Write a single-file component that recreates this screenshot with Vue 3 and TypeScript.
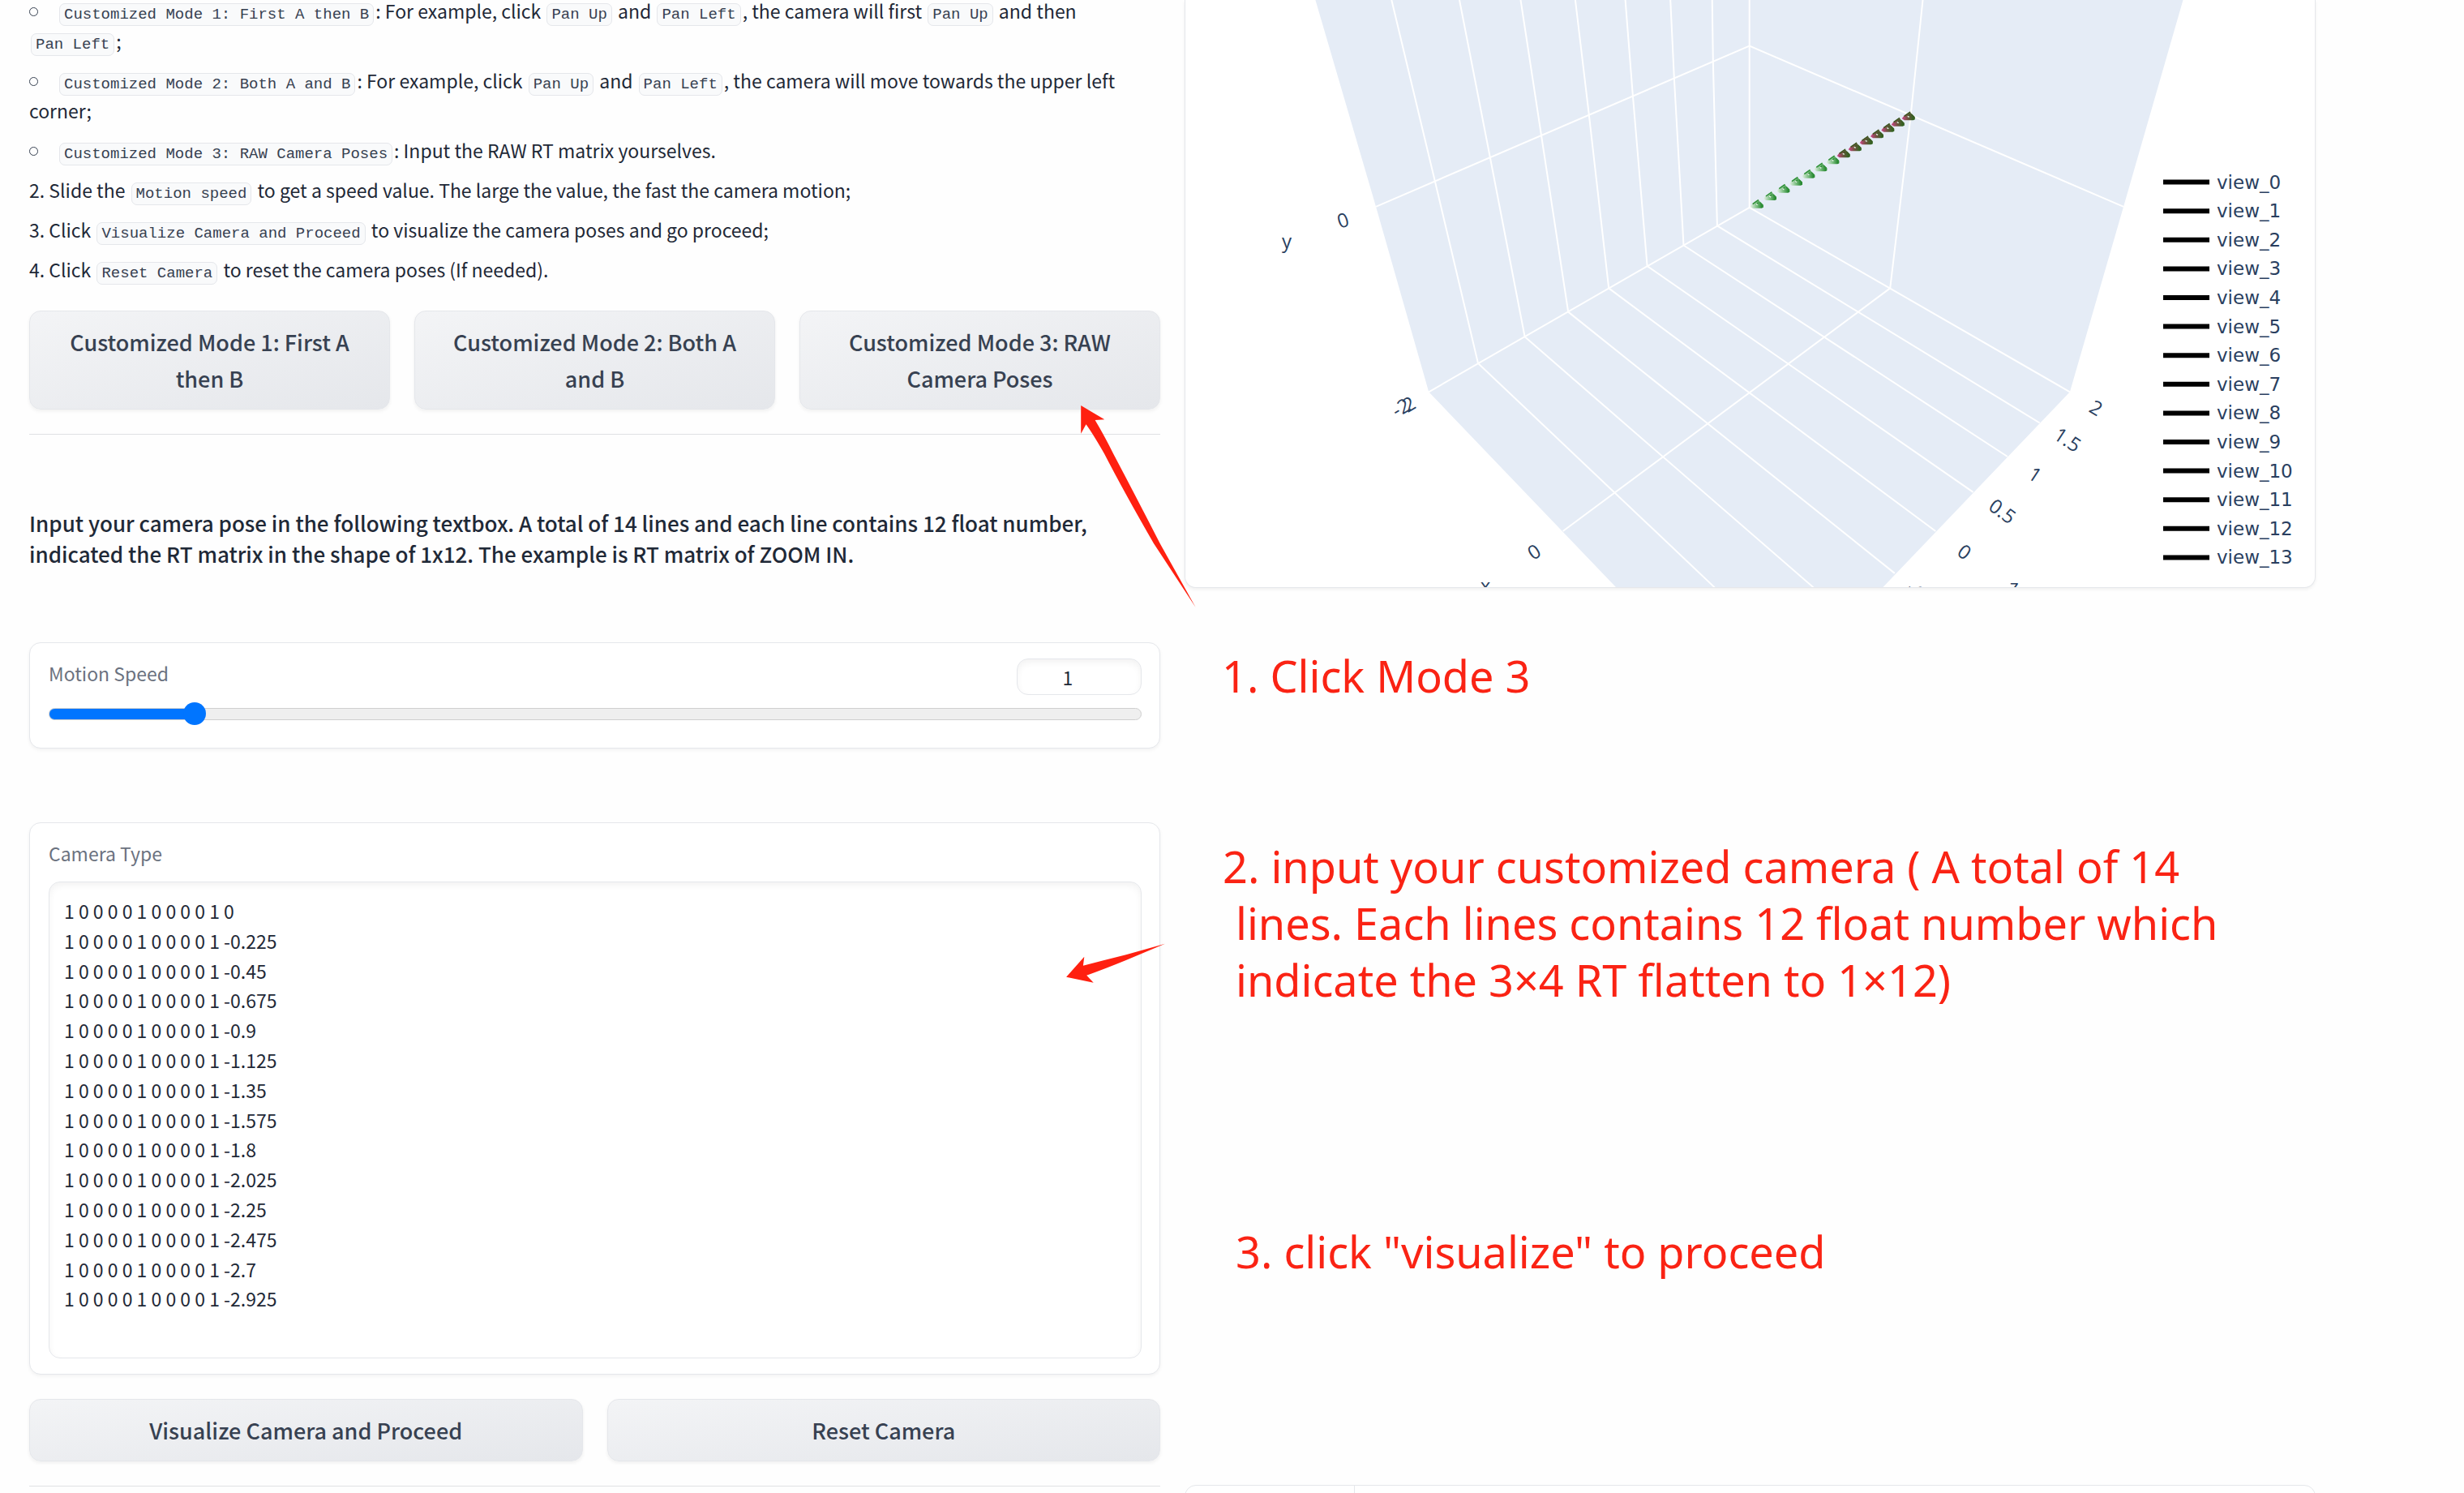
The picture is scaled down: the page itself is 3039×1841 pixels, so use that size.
<script setup lang="ts">
import { computed, ref } from 'vue'

type Segment = { text: string; code?: boolean }

const modeHints: Segment[][] = [
  [
    { text: 'Customized Mode 1: First A then B', code: true },
    { text: ': For example, click ' },
    { text: 'Pan Up', code: true },
    { text: ' and ' },
    { text: 'Pan Left', code: true },
    { text: ', the camera will first ' },
    { text: 'Pan Up', code: true },
    { text: ' and then ' },
    { text: 'Pan Left', code: true },
    { text: ';' },
  ],
  [
    { text: 'Customized Mode 2: Both A and B', code: true },
    { text: ': For example, click ' },
    { text: 'Pan Up', code: true },
    { text: ' and ' },
    { text: 'Pan Left', code: true },
    { text: ', the camera will move towards the upper left corner;' },
  ],
  [
    { text: 'Customized Mode 3: RAW Camera Poses', code: true },
    { text: ': Input the RAW RT matrix yourselves.' },
  ],
]

const steps: Segment[][] = [
  [
    { text: '2. Slide the ' },
    { text: 'Motion speed', code: true },
    { text: ' to get a speed value. The large the value, the fast the camera motion;' },
  ],
  [
    { text: '3. Click ' },
    { text: 'Visualize Camera and Proceed', code: true },
    { text: ' to visualize the camera poses and go proceed;' },
  ],
  [
    { text: '4. Click ' },
    { text: 'Reset Camera', code: true },
    { text: ' to reset the camera poses (If needed).' },
  ],
]

const modes = [
  'Customized Mode 1: First A then B',
  'Customized Mode 2: Both A and B',
  'Customized Mode 3: RAW Camera Poses',
]

const speed = ref(1)
const maxSpeed = 8
const fill = computed(() => `${(speed.value / maxSpeed) * 100}%`)

const depths = ['-0.225', '-0.45', '-0.675', '-0.9', '-1.125', '-1.35', '-1.575', '-1.8', '-2.025', '-2.25', '-2.475', '-2.7', '-2.925']
const poses = ref(['1 0 0 0 0 1 0 0 0 0 1 0', ...depths.map((d) => `1 0 0 0 0 1 0 0 0 0 1 ${d}`)].join('\n') + '\n')

const views = Array.from({ length: 14 }, (_, i) => ({ name: `view_${i}`, y: 224.6 + i * 35.6 }))

const grid = [
  'M1716.3 0L1769.9 223.7L1823 447.9L2114.8 724.4',
  'M1800 0L1837.8 194L1880.6 415.3L2236.7 724.4',
  'M1875.5 0L1901 167L1934.2 384.6L2336.8 706.9',
  'M1942.9 0L1959.7 140.6L1984.2 355.4L2387.3 655',
  'M2004.6 0L2013.8 117L2031.6 328L2433.6 606.9',
  'M2060.2 0L2064.8 95.8L2076.5 302.5L2475.9 563',
  'M2111.7 0L2112.8 74.6L2117.9 278.4L2515.7 521.5',
  'M1697 254.8L2157.7 56.6L2619.1 254.8',
  'M1762.2 483.3L2157.7 255.8L2552.9 483.3',
  'M2157.7 0V255.8',
  'M2371.5 0L2356.7 141.6L2331.2 355.4L1927.6 655',
]

const frusta = [
  [2166.7, 251.7], [2183, 242], [2199.3, 232.7], [2215, 223.7], [2230.3, 214.7], [2245.3, 206.3], [2260.3, 197.3],
  [2273.7, 189.3], [2287.7, 181.3], [2301.7, 173.3], [2315, 165.3], [2328.3, 157.7], [2340.7, 150.7], [2353.7, 143.3],
].map(([x, y], i) => ({ x, y, paint: i < 7 ? 'url(#green)' : 'url(#red)', dark: i >= 7 }))

const ticks = [
  { t: '0', x: 1656.6, y: 272.3, r: -18 },
  { t: '2', x: 1738, y: 499, r: -30 },
  { t: '-2', x: 1728, y: 503, r: -30 },
  { t: '0', x: 1892.3, y: 681, r: -33 },
  { t: '2', x: 2585, y: 503.5, r: 30 },
  { t: '1.5', x: 2549.8, y: 542.7, r: 33 },
  { t: '1', x: 2509.5, y: 585.7, r: 33 },
  { t: '0.5', x: 2469.3, y: 631, r: 36 },
  { t: '0', x: 2422.4, y: 681, r: 36 },
  { t: '-0.5', x: 2370, y: 736, r: 43 },
]
</script>

<template>
  <main class="page">
    <section class="column">
      <div class="prose">
        <ul>
          <li v-for="(hint, i) in modeHints" :key="i">
            <template v-for="(s, j) in hint" :key="j"><code v-if="s.code">{{ s.text }}</code><template v-else>{{ s.text }}</template></template>
          </li>
        </ul>
        <p v-for="(step, i) in steps" :key="i">
          <template v-for="(s, j) in step" :key="j"><code v-if="s.code">{{ s.text }}</code><template v-else>{{ s.text }}</template></template>
        </p>
      </div>

      <div class="buttons modes">
        <button v-for="m in modes" :key="m" type="button">{{ m }}</button>
        <svg class="arrow arrow-mode" viewBox="1333 500 142 250" width="142" height="250" aria-hidden="true">
          <path d="M1333.2 500L1362.3 517.3L1350.6 518Q1362 537 1373.4 560Q1404 618 1430.6 670L1474.7 749L1422.9 670Q1386 606 1362.3 560Q1348 535 1339.5 523.3L1333.2 534.7Z" />
        </svg>
      </div>

      <hr />

      <h3>Input your camera pose in the following textbox. A total of 14 lines and each line contains 12 float number, indicated the RT matrix in the shape of 1x12. The example is RT matrix of ZOOM IN.</h3>

      <div class="card speed">
        <div class="speed-head">
          <label for="speed">Motion Speed</label>
          <input v-model.number="speed" class="number" type="number" min="0" :max="maxSpeed" aria-label="Motion Speed value" />
        </div>
        <input id="speed" v-model.number="speed" class="slider" type="range" min="0" :max="maxSpeed" :style="{ '--fill': fill }" />
      </div>

      <div class="card poses">
        <label for="poses">Camera Type</label>
        <textarea id="poses" v-model="poses" rows="15" spellcheck="false"></textarea>
        <svg class="arrow arrow-poses" viewBox="1315 1163 122 49" width="122" height="49" aria-hidden="true">
          <path d="M1315.1 1204.7L1337.3 1179.7L1335.9 1190.7Q1362 1184 1388.8 1177.3L1436.9 1163.7L1388.8 1184Q1362 1195 1340.2 1202.7L1348.7 1211.7Z" />
        </svg>
      </div>

      <div class="buttons">
        <button type="button">Visualize Camera and Proceed</button>
        <button type="button">Reset Camera</button>
      </div>

      <hr />
    </section>

    <section class="column">
      <div class="plot">
        <svg viewBox="1462 0 1393 724" role="img" aria-label="Camera poses">
          <defs>
            <linearGradient id="green">
              <stop offset="0" stop-color="#e8f3ea" />
              <stop offset="0.5" stop-color="#7dbf83" />
              <stop offset="1" stop-color="#127a1c" />
            </linearGradient>
            <linearGradient id="red">
              <stop offset="0" stop-color="#d0458c" />
              <stop offset="0.4" stop-color="#7d5048" />
              <stop offset="1" stop-color="#1d6a16" />
            </linearGradient>
          </defs>
          <path class="walls" d="M1622.4 0L1697 254.8L1762.2 483.3L1993.9 725H2321.5L2552.9 483.3L2619.1 254.8L2692.5 0Z" />
          <path v-for="d in grid" :key="d" class="grid" :d="d" />
          <g v-for="f in frusta" :key="f.x" :transform="`translate(${f.x} ${f.y})`">
            <path d="M-8 3L-5 -1L0 -4L2 -6L3 -4L8 1V4L6 5H-5Z" :fill="f.paint" />
            <path d="M-5 0L-1 -3L2 -5M4 -2L7 1V4M-1 1L2 -2" fill="none" :stroke="f.dark ? '#3c5a22' : '#2f8f38'" stroke-width="1.5" />
            <path d="M-1 0L1 1" stroke="#eef5ee" stroke-width="1.5" />
          </g>
          <text
            v-for="(k, i) in ticks"
            :key="i"
            class="tick"
            text-anchor="middle"
            dy="8"
            :transform="`translate(${k.x} ${k.y}) rotate(${k.r})`"
          >{{ k.t }}</text>
          <text class="axis" text-anchor="middle" x="1587" y="306">y</text>
          <text class="axis" text-anchor="middle" x="1832" y="731">x</text>
          <text class="axis" text-anchor="middle" x="2484" y="732">z</text>
          <g v-for="v in views" :key="v.name">
            <path class="swatch" :d="`M2668 ${v.y}H2725`" />
            <text class="legend" x="2734" :y="v.y + 8">{{ v.name }}</text>
          </g>
        </svg>
      </div>

      <p class="note first">1. Click Mode 3</p>
      <p class="note second">2. input your customized camera ( A total of 14<br />lines. Each lines contains 12 float number which<br />indicate the 3×4 RT flatten to 1×12)</p>
      <p class="note third">3. click "visualize" to proceed</p>

      <div class="panel"><div class="tab"></div></div>
    </section>
  </main>
</template>

<style>
body {
  background: #fefefe;
}
</style>

<style scoped>
.page {
  display: grid;
  grid-template-columns: 1fr 1fr;
  gap: 30px;
  height: 100vh;
  overflow: hidden;
  padding: 0 183px 0 36px;
  box-sizing: border-box;
  color: #1f2937;
  font-family: "Noto Sans CJK SC", "Noto Sans", sans-serif;
  font-size: 23px;
  line-height: 37px;
}

.column {
  min-width: 0;
}

.prose {
  margin: -5px 0 32px;
  padding-right: 24px;
}

ul {
  margin: 0;
  padding: 0;
  list-style: none;
}

li,
.prose p {
  margin: 0 0 12px;
}

.prose p:last-child {
  margin-bottom: 0;
}

li::before {
  content: "";
  display: inline-block;
  box-sizing: border-box;
  width: 11px;
  height: 11px;
  margin-right: 24px;
  border: 1px solid #374151;
  border-radius: 50%;
  vertical-align: 3px;
}

code {
  margin: 0 2px;
  padding: 2px 5px;
  border: 1px solid #e5e7eb;
  border-radius: 7px;
  background: #f9fafb;
  color: #374151;
  font-family: "Liberation Mono", monospace;
  font-size: 19px;
  line-height: 19px;
  white-space: nowrap;
}

.buttons {
  position: relative;
  display: flex;
  gap: 30px;
}

button {
  flex: 1 1 0;
  padding: 15px 30px;
  border: 1px solid #e5e7eb;
  border-radius: 14px;
  background: linear-gradient(to bottom right, #f3f4f6, #e5e7eb);
  box-shadow: 0 2px 4px rgba(0, 0, 0, 0.06);
  color: #374151;
  font-family: inherit;
  font-size: 27px;
  font-weight: 500;
  line-height: 45px;
}

hr {
  height: 1px;
  margin: 30px 0 0;
  border: 0;
  background: #e0e1e4;
}

h3 {
  margin: 90px 0;
  font-size: 26px;
  font-weight: 500;
  line-height: 38px;
}

.card {
  position: relative;
  padding: 19px 22px 19px 23px;
  border: 1px solid #e5e7eb;
  border-radius: 14px;
  background: #fff;
  box-shadow: 0 2px 4px rgba(0, 0, 0, 0.05);
}

label {
  display: block;
  color: #6b7280;
}

.card.speed {
  padding-bottom: 27px;
}

.speed-head {
  display: flex;
  align-items: flex-start;
  justify-content: space-between;
}

.number,
textarea {
  box-sizing: border-box;
  border: 1px solid #e5e7eb;
  border-radius: 14px;
  background: #fff;
  box-shadow: inset 0 4px 8px rgba(0, 0, 0, 0.05);
  color: #1f2937;
  font-family: inherit;
  font-size: 23px;
}

.number {
  width: 154px;
  height: 45px;
  padding: 0 32px 0 4px;
  text-align: center;
  appearance: textfield;
}

.number::-webkit-inner-spin-button {
  display: none;
}

.slider {
  display: block;
  width: 100%;
  height: 30px;
  margin: 8px 0 0;
  appearance: none;
  background: transparent;
}

.slider::-webkit-slider-runnable-track {
  box-sizing: border-box;
  height: 15px;
  border: 1px solid #cfcfcf;
  border-radius: 8px;
  background: linear-gradient(#0075ff, #0075ff) 0 0 / var(--fill) 100% no-repeat border-box #efefef;
}

.slider::-webkit-slider-thumb {
  width: 28px;
  height: 28px;
  margin-top: -8px;
  border-radius: 50%;
  appearance: none;
  background: #0075ff;
}

.card.poses {
  margin: 91px 0 30px;
}

textarea {
  display: block;
  width: 100%;
  margin-top: 16px;
  padding: 17px 18px;
  line-height: 1.6;
  resize: none;
  overflow: hidden;
}

.arrow {
  position: absolute;
  z-index: 1;
  fill: #ff2010;
  pointer-events: none;
}

.arrow-mode {
  top: 117px;
  right: -44px;
}

.arrow-poses {
  top: 148px;
  right: -7px;
}

.plot {
  overflow: hidden;
  border: 1px solid #e5e7eb;
  border-top: 0;
  border-radius: 0 0 14px 14px;
  background: #fff;
  box-shadow: 0 2px 4px rgba(0, 0, 0, 0.06);
}

.plot svg {
  display: block;
  width: 100%;
}

.walls {
  fill: #e5ecf6;
}

.grid {
  fill: none;
  stroke: #fff;
  stroke-width: 2;
}

.tick,
.axis {
  fill: #2a3f5f;
  font-family: "Open Sans", sans-serif;
  font-size: 24px;
}

.legend {
  fill: #2a3f5f;
  font-family: "DejaVu Sans", sans-serif;
  font-size: 23px;
}

.swatch {
  stroke: #000;
  stroke-width: 6;
}

.note {
  margin: 0;
  color: #fa2314;
  font-family: "Noto Sans", sans-serif;
  font-size: 54px;
  line-height: 70px;
}

.note.first {
  margin: 73px 0 0 46px;
}

.note.second {
  margin: 165px 0 265px 63px;
  text-indent: -16px;
  white-space: nowrap;
}

.note.third {
  margin: 0 0 253px 63px;
}

.panel {
  border: 1px solid #e5e7eb;
  border-radius: 14px;
  background: #fff;
}

.tab {
  width: 208px;
  height: 60px;
  border-right: 1px solid #e5e7eb;
}
</style>
